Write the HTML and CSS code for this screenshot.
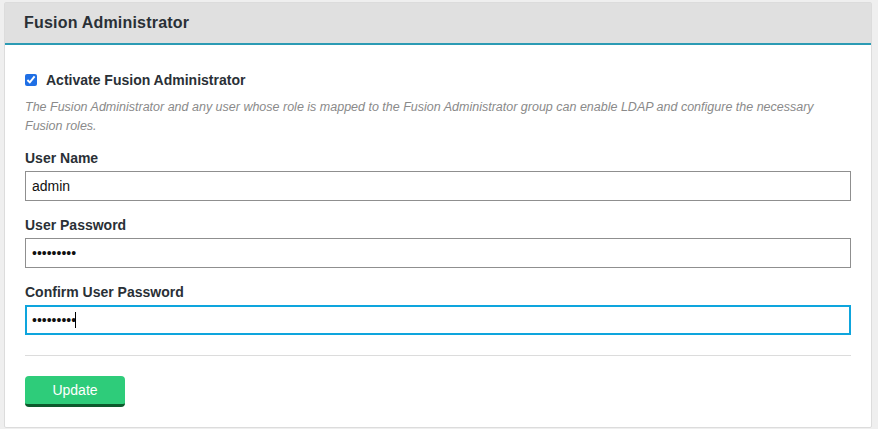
FILE: index.html
```html
<!DOCTYPE html>
<html lang="en">
<head>
<meta charset="utf-8">
<title>Fusion Administrator</title>
<link rel="stylesheet" href="styles.css">
</head>
<body>
<section class="panel">
  <header class="panel-header">
    <h2 class="panel-title">Fusion Administrator</h2>
  </header>
  <form class="panel-body">
    <label class="check-row">
      <input type="checkbox" class="check" checked>
      <span class="check-label">Activate Fusion Administrator</span>
    </label>
    <p class="help">The Fusion Administrator and any user whose role is mapped to the Fusion Administrator group can enable LDAP and configure the necessary Fusion roles.</p>
    <div class="field">
      <label class="field-label" for="user">User Name</label>
      <input class="text-input" id="user" type="text" value="admin">
    </div>
    <div class="field">
      <label class="field-label" for="pw">User Password</label>
      <input class="text-input" id="pw" type="text" value="•••••••••">
    </div>
    <div class="field">
      <label class="field-label" for="pw2">Confirm User Password</label>
      <div class="input-wrap">
        <input class="text-input is-focused" id="pw2" type="text" value="•••••••••">
        <span class="caret"></span>
      </div>
    </div>
    <hr class="divider">
    <button type="button" class="btn-update">Update</button>
  </form>
</section>
</body>
</html>
```

FILE: styles.css
```css
html, body {
  margin: 0;
  padding: 0;
}
body {
  background: #efefef;
  font-family: "Liberation Sans", Arial, sans-serif;
  color: #2a3036;
  padding: 2px 6px 0 4px;
}
.panel {
  background: #fff;
  border: 1px solid #dcdcdc;
  border-radius: 2px;
}
.panel-header {
  background: #e0e0e0;
  height: 40px;
  border-bottom: 2px solid #2b9bb4;
  display: flex;
  align-items: center;
  padding: 0 19px;
}
.panel-title {
  margin: 0;
  font-size: 16px;
  font-weight: bold;
  color: #2a3036;
  letter-spacing: 0.2px;
}
.panel-body {
  display: block;
  padding: 25px 20px 20px 20px;
  margin: 0;
}
.check-row {
  display: flex;
  align-items: center;
  height: 20px;
}
.check {
  margin: 0 9px 0 0;
  width: 12px;
  height: 12px;
  accent-color: #1f6fe5;
}
.check-label {
  font-size: 14px;
  font-weight: bold;
  color: #2a3036;
}
.help {
  margin: 8px 0 13px 0;
  font-size: 12.5px;
  line-height: 18.5px;
  font-style: italic;
  color: #8a8a8a;
}
.field {
  display: flex;
  flex-direction: column;
  margin-bottom: 14px;
}
.field-label {
  font-size: 14px;
  font-weight: bold;
  line-height: 20px;
  margin-bottom: 3px;
  color: #2a3036;
}
.input-wrap {
  position: relative;
}
.text-input {
  box-sizing: border-box;
  width: 100%;
  height: 30px;
  border: 1px solid #8f8f8f;
  border-radius: 0;
  padding: 0 6px;
  font-family: "Liberation Sans", Arial, sans-serif;
  font-size: 14px;
  color: #111;
  background: #fff;
  outline: none;
}
.text-input.is-focused {
  border: 2px solid #0ea5dd;
  padding: 0 5px;
}
.caret {
  position: absolute;
  left: 50px;
  top: 7px;
  width: 1px;
  height: 16px;
  background: #000;
}
.divider {
  border: 0;
  border-top: 1px solid #dcdcdc;
  margin: 20px 0 20px 0;
  height: 0;
}
.btn-update {
  display: block;
  width: 100px;
  height: 31px;
  background: #2ecc7a;
  border: 0;
  border-bottom: 3px solid #0c5a2c;
  border-radius: 4px;
  color: #fff;
  font-family: "Liberation Sans", Arial, sans-serif;
  font-size: 14px;
  padding: 0;
}
```
